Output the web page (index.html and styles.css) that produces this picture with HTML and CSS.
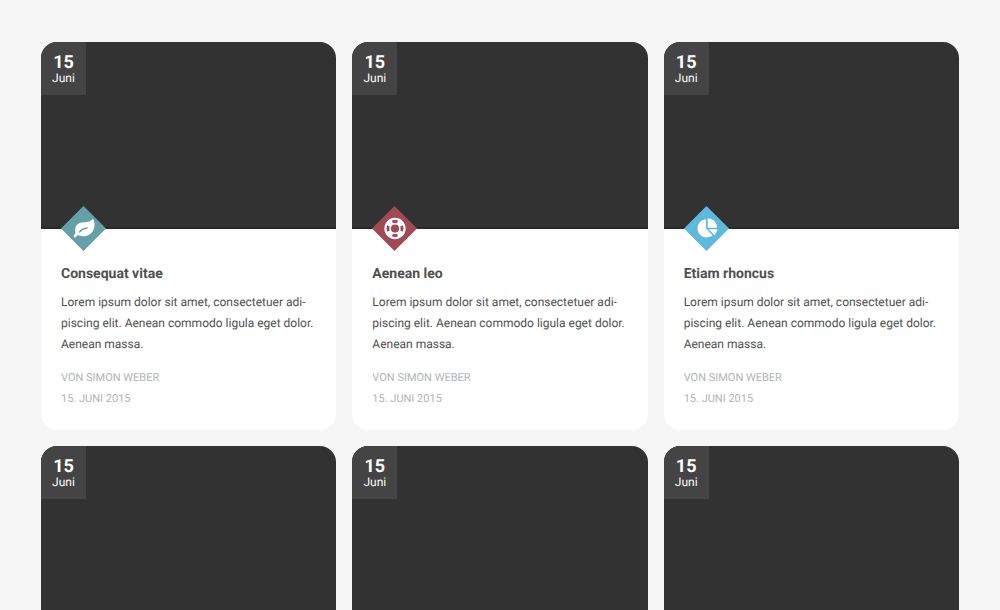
FILE: index.html
```html
<!DOCTYPE html>
<html lang="de">
<head>
<meta charset="utf-8">
<title>Blog</title>
<link rel="stylesheet" href="styles.css">
</head>
<body>
<main class="grid">
  <article class="card">
    <div class="media">
      <time class="date" datetime="2015-06-15"><strong class="day">15</strong><span class="month">Juni</span></time>
      <svg class="badge teal" viewBox="0 0 46 46" aria-hidden="true"><path class="diamond" d="M23 0 46 23 23 46 0 23z"/><path class="glyph" d="M32.500 13C34.500 16 34.800 19 33.700 23C32 28.800 26 32 20.500 30.700C18.500 30.200 17.500 29.600 16.500 30.200C15.500 31 15.300 32.200 14.200 32.200C13.300 32.200 12.500 31 13 30.200C13.400 29 15 28.300 14.700 27C13.500 22 16 18.500 20 17.200C24 16 29 17.500 32.500 13z"/><path class="vein" d="M19 26.500C21 24.200 23.500 22.800 26.500 22.500"/></svg>
    </div>
    <div class="body">
      <h2 class="title">Consequat vitae</h2>
      <p class="text">Lorem ipsum dolor sit amet, consectetuer adi&shy;piscing elit. Aenean commodo ligula eget dolor. Aenean massa.</p>
      <p class="meta">von Simon Weber<br>15. Juni 2015</p>
    </div>
  </article>
  <article class="card">
    <div class="media">
      <time class="date" datetime="2015-06-15"><strong class="day">15</strong><span class="month">Juni</span></time>
      <svg class="badge red" viewBox="0 0 46 46" aria-hidden="true"><path class="diamond" d="M23 0 46 23 23 46 0 23z"/><circle class="glyph" cx="23.500" cy="23" r="10.900"/><g class="segments"><path d="M20.300 15Q23.500 13.300 26.700 15L25.500 17.600Q23.500 16.900 21.500 17.600z"/><path d="M20.300 31Q23.500 32.700 26.700 31L25.500 28.400Q23.500 29.100 21.500 28.400z"/><path d="M15.500 19.800Q13.800 23 15.500 26.200L18.100 25Q17.400 23 18.100 21z"/><path d="M31.500 19.800Q33.200 23 31.500 26.200L28.900 25Q29.600 23 28.900 21z"/><circle cx="23.500" cy="23" r="4.200"/></g></svg>
    </div>
    <div class="body">
      <h2 class="title">Aenean leo</h2>
      <p class="text">Lorem ipsum dolor sit amet, consectetuer adi&shy;piscing elit. Aenean commodo ligula eget dolor. Aenean massa.</p>
      <p class="meta">von Simon Weber<br>15. Juni 2015</p>
    </div>
  </article>
  <article class="card">
    <div class="media">
      <time class="date" datetime="2015-06-15"><strong class="day">15</strong><span class="month">Juni</span></time>
      <svg class="badge blue" viewBox="0 0 46 46" aria-hidden="true"><path class="diamond" d="M23 0 46 23 23 46 0 23z"/><path class="glyph" d="M22.500 13.500V23L29.200 29.800A9.300 9.300 0 1 1 22.500 13.500zM24.200 12.500A9.600 9.600 0 0 1 33.800 22.200H24.200zM25.200 23.700H34A9.300 9.300 0 0 1 31.200 29.800z"/></svg>
    </div>
    <div class="body">
      <h2 class="title">Etiam rhoncus</h2>
      <p class="text">Lorem ipsum dolor sit amet, consectetuer adi&shy;piscing elit. Aenean commodo ligula eget dolor. Aenean massa.</p>
      <p class="meta">von Simon Weber<br>15. Juni 2015</p>
    </div>
  </article>
  <article class="card">
    <div class="media"><time class="date" datetime="2015-06-15"><strong class="day">15</strong><span class="month">Juni</span></time></div>
  </article>
  <article class="card">
    <div class="media"><time class="date" datetime="2015-06-15"><strong class="day">15</strong><span class="month">Juni</span></time></div>
  </article>
  <article class="card">
    <div class="media"><time class="date" datetime="2015-06-15"><strong class="day">15</strong><span class="month">Juni</span></time></div>
  </article>
</main>
</body>
</html>
```
FILE: styles.css
```css
* { box-sizing: border-box; }
html { background: #f6f6f6; }
body {
  margin: 0;
  height: 100vh;
  overflow: hidden;
  font-family: Roboto, "Liberation Sans", sans-serif;
  text-rendering: geometricPrecision;
  color: #505050;
}
.grid {
  display: grid;
  grid-template-columns: repeat(3, minmax(0, 1fr));
  gap: 16px;
  padding: 42px 41px;
}
.card { background: #fff; border-radius: 16px; }
.media {
  position: relative;
  height: 187px;
  background: #323232;
  border-bottom: 2px solid #292929;
  border-radius: 16px 16px 0 0;
}
.date {
  display: flex;
  flex-direction: column;
  align-items: center;
  width: 45px;
  height: 53px;
  padding-top: 12px;
  background: #444;
  border-top-left-radius: 16px;
  color: #fff;
}
.day { font-size: 18px; line-height: 18px; font-weight: 700; }
.month { font-size: 12px; line-height: 12px; }
.badge {
  position: absolute;
  left: 20px;
  bottom: -24px;
  width: 45px;
  height: 45px;
}
.teal { color: #64a0a6; }
.red { color: #a04a56; }
.blue { color: #5fb9dc; }
.diamond, .segments { fill: currentColor; }
.glyph { fill: #fff; }
.vein { fill: none; stroke: currentColor; stroke-width: 1.4; stroke-linecap: round; }
.body { padding: 35px 20px 21px; }
.title { margin: 0 0 7px; font-size: 14px; line-height: 21px; font-weight: 700; }
.text { margin: 0 0 12px; font-size: 12px; line-height: 21px; hyphens: manual; }
.meta { margin: 0; font-size: 11px; line-height: 21px; color: #b0b4b6; text-transform: uppercase; }
```
